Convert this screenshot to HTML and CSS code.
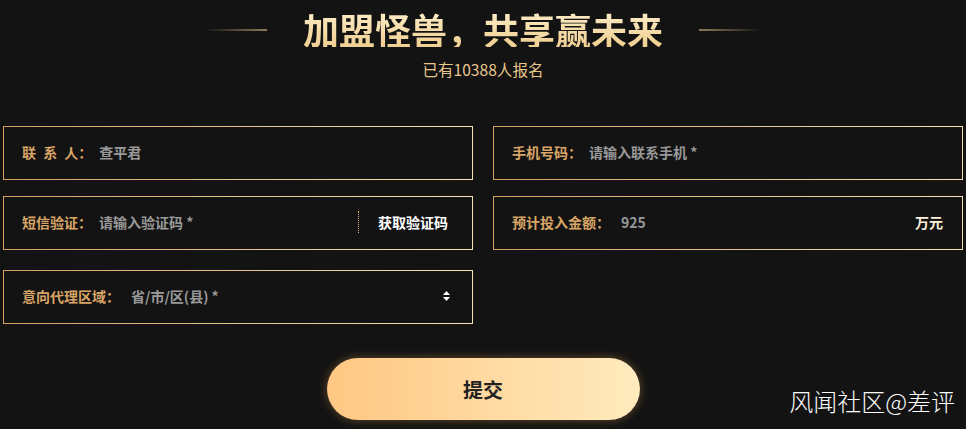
FILE: index.html
```html
<!DOCTYPE html>
<html lang="zh-CN">
<head>
<meta charset="utf-8">
<title>加盟怪兽</title>
<link rel="stylesheet" href="styles.css">
</head>
<body>
<div class="page">
  <header class="head">
    <div class="title-row">
      <span class="line line-left"></span>
      <h1 class="title">加盟怪兽，共享赢未来</h1>
      <span class="line line-right"></span>
    </div>
    <p class="sub">已有10388人报名</p>
  </header>

  <form class="form">
    <div class="field">
      <span class="label spaced">联 系 人：</span>
      <span class="value">查平君</span>
    </div>
    <div class="field">
      <span class="label">手机号码：</span>
      <span class="value">请输入联系手机 *</span>
    </div>
    <div class="field">
      <span class="label">短信验证：</span>
      <span class="value grow">请输入验证码 *</span>
      <span class="sep"></span>
      <span class="code">获取验证码</span>
    </div>
    <div class="field">
      <span class="label">预计投入金额：</span>
      <span class="value grow wide">925</span>
      <span class="unit">万元</span>
    </div>
    <div class="field region">
      <span class="label">意向代理区域：</span>
      <span class="value grow wide">省/市/区(县) *</span>
      <svg class="arrows" width="7" height="10" viewBox="0 0 7 10"><path d="M3.5 0 L7 4 H0 Z M0 6 H7 L3.5 10 Z" fill="#fff"/></svg>
    </div>
  </form>

  <div class="actions">
    <button class="submit" type="button">提交</button>
  </div>

  <div class="watermark">风闻社区@差评</div>
</div>
</body>
</html>
```

FILE: styles.css
```css
* { box-sizing: border-box; }
html, body {
  margin: 0;
  padding: 0;
  background: #131313;
  font-family: "Noto Sans CJK SC", "Noto Sans", sans-serif;
}
.page {
  position: relative;
  width: 966px;
  height: 429px;
  overflow: hidden;
}
.head {
  padding-top: 11px;
  text-align: center;
}
.title-row {
  display: flex;
  justify-content: center;
  align-items: center;
  gap: 36px;
}
.line {
  width: 63px;
  height: 2px;
  margin-top: 2px;
}
.line-left { background: linear-gradient(90deg, rgba(141,123,89,0), #8d7b59); }
.line-right { background: linear-gradient(90deg, #8d7b59, rgba(141,123,89,0)); }
.title {
  margin: 0;
  font-size: 36px;
  line-height: 36px;
  font-weight: 700;
  background: linear-gradient(180deg, #fcecc6, #f0cf91);
  -webkit-background-clip: text;
  background-clip: text;
  color: transparent;
}
.sub {
  margin: 11px 0 0;
  font-size: 15.6px;
  line-height: 22px;
  color: #e8c68c;
}
.form {
  margin: 46px 0 0 3px;
  display: grid;
  grid-template-columns: 470px 470px;
  column-gap: 20px;
  row-gap: 16px;
}
.field {
  height: 54px;
  display: flex;
  align-items: center;
  padding: 0 19px 2px 18px;
  border: 1px solid #e0b678;
  border-image: linear-gradient(90deg, #d5a263, #f7e2b8) 1;
  font-size: 14px;
  font-weight: 700;
}
.region { margin-top: 4px; }
.label {
  color: #d9a566;
  margin-right: 7px;
  white-space: pre;
}
.label.spaced { word-spacing: 4px; }
.value { color: #999999; }
.value.wide { margin-left: 4px; }
.grow { flex: 1; }
.sep {
  width: 0;
  height: 22px;
  border-left: 1px dotted #e8c078;
  margin-right: 19px;
}
.code {
  color: #ffffff;
  margin-right: 5px;
}
.unit { color: #fbf0dc; }
.arrows { margin-right: 3px; }
.actions {
  display: flex;
  justify-content: center;
  margin-top: 34px;
}
.submit {
  width: 313px;
  height: 62px;
  border: 0;
  border-radius: 31px;
  background: linear-gradient(90deg, #ffc782, #ffebbe);
  box-shadow: 0 0 10px rgba(255, 184, 90, 0.35);
  font-family: "Noto Sans CJK SC", sans-serif;
  font-size: 20px;
  font-weight: 700;
  color: #222;
  cursor: pointer;
}
.watermark {
  position: absolute;
  right: 11px;
  bottom: 13px;
  font-size: 24px;
  line-height: 30px;
  color: #ffffff;
  font-weight: 300;
}
```
